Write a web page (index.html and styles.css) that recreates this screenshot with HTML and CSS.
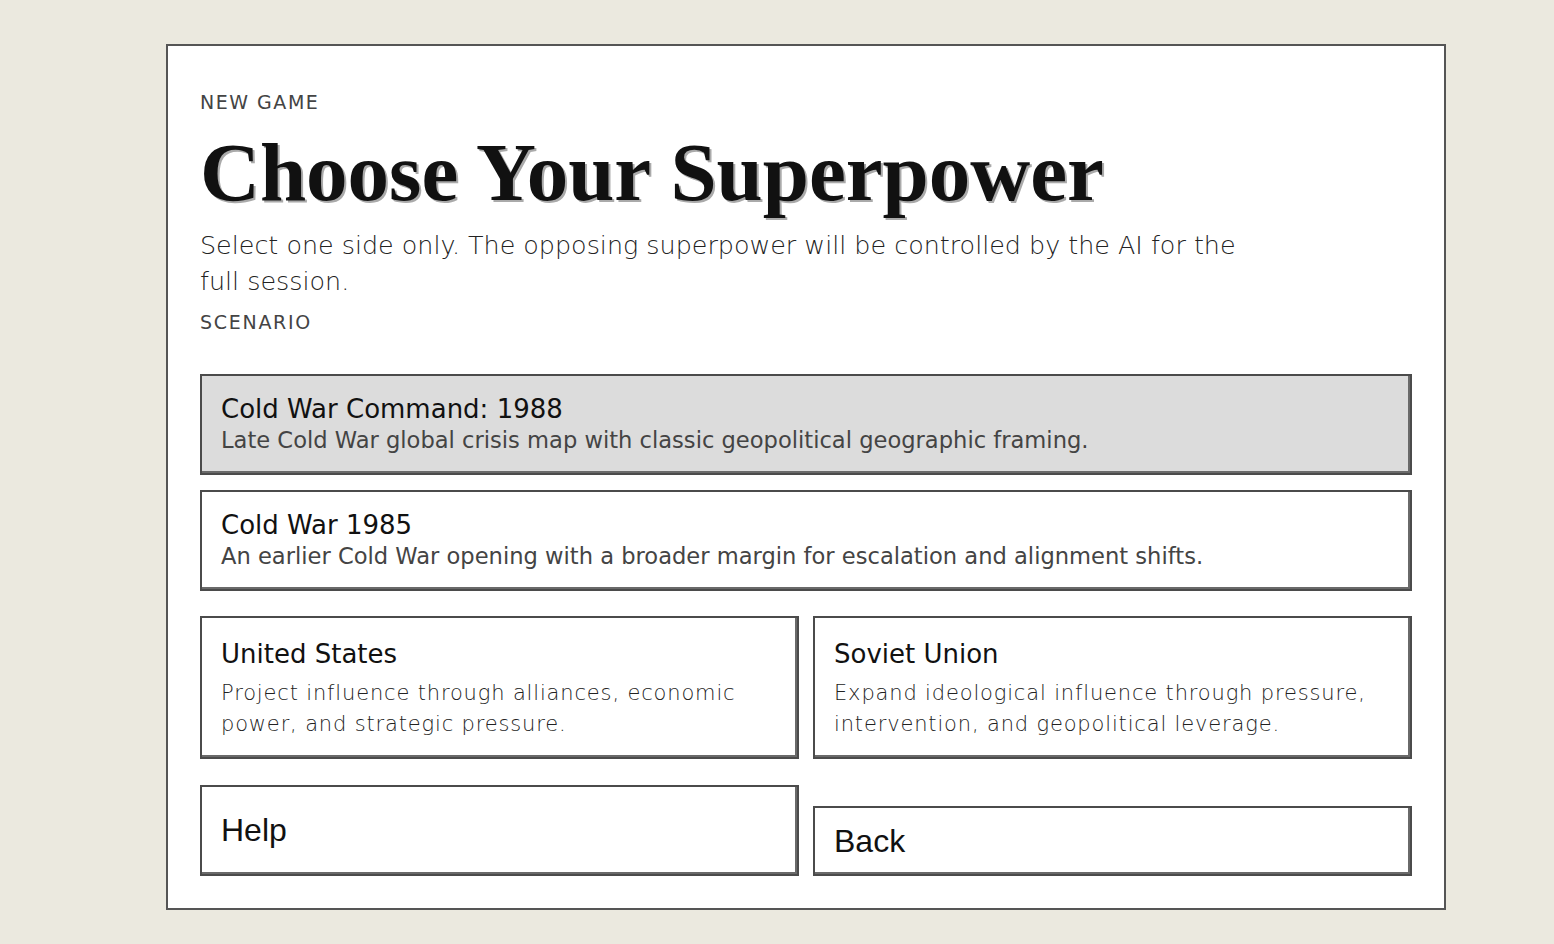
FILE: index.html
```html
<!DOCTYPE html>
<html lang="en">
<head>
    <meta charset="UTF-8">
    <meta name="viewport" content="width=device-width, initial-scale=1.0">
    <title>New Game - Choose Your Superpower</title>
    <link rel="stylesheet" href="styles.css">
</head>
<body>
    <main class="panel">
        <p class="eyebrow">NEW GAME</p>
        <h1 class="title">Choose Your Superpower</h1>
        <p class="lead">Select one side only. The opposing superpower will be controlled by the AI for the full session.</p>
        <p class="label">SCENARIO</p>

        <div class="scenarios">
            <button class="card scenario selected">
                <span class="card-title">Cold War Command: 1988</span>
                <span class="card-text">Late Cold War global crisis map with classic geopolitical geographic framing.</span>
            </button>
            <button class="card scenario">
                <span class="card-title">Cold War 1985</span>
                <span class="card-text">An earlier Cold War opening with a broader margin for escalation and alignment shifts.</span>
            </button>
        </div>

        <div class="sides">
            <button class="card side">
                <span class="card-title">United States</span>
                <span class="side-text">Project influence through alliances, economic power, and strategic pressure.</span>
            </button>
            <button class="card side">
                <span class="card-title">Soviet Union</span>
                <span class="side-text">Expand ideological influence through pressure, intervention, and geopolitical leverage.</span>
            </button>
        </div>

        <div class="actions">
            <button class="card action help">Help</button>
            <button class="card action back">Back</button>
        </div>
    </main>
</body>
</html>
```

FILE: styles.css
```css
body {
    margin: 0;
    padding: 44px 0 34px 166px;
    background-color: #ebe9df;
    font-family: "DejaVu Sans", sans-serif;
    color: #111;
}
.panel {
    width: 1212px;
    padding: 32px;
    background-color: #fff;
    border: 2px solid #555;
}
.eyebrow {
    margin: 12px 0 0;
    font-size: 19px;
    line-height: 24px;
    letter-spacing: 0.08em;
    color: #444;
}
.title {
    margin: 3px 0 0;
    font-family: "Liberation Serif", serif;
    font-size: 83px;
    line-height: 110px;
    font-weight: bold;
    color: #111;
    text-shadow: 2px 2px 0 #aaa;
}
.lead {
    margin: 0;
    max-width: 1060px;
    font-size: 25.4px;
    line-height: 36px;
    font-weight: 300;
    color: #222;
}
.label {
    margin: 11px 0 0;
    font-size: 19px;
    line-height: 24px;
    letter-spacing: 0.09em;
    color: #444;
}
.card {
    display: flex;
    flex-direction: column;
    justify-content: flex-start;
    width: 100%;
    margin: 0;
    text-align: left;
    background-color: #fff;
    border: 2px solid #4b4b4b;
    box-shadow: inset -2px -2px 0 #6a6a6a;
    font-family: "DejaVu Sans", sans-serif;
    color: #111;
    cursor: pointer;
}
.scenarios {
    margin-top: 40px;
    display: flex;
    flex-direction: column;
    gap: 15px;
}
.scenario {
    height: 101px;
    padding: 17px 19px 0;
}
.selected {
    background-color: #dcdcdc;
}
.card-title {
    display: block;
    font-size: 26px;
    line-height: 32px;
}
.card-text {
    display: block;
    font-size: 22.6px;
    line-height: 30px;
    color: #444;
}
.sides {
    margin-top: 25px;
    display: grid;
    grid-template-columns: 1fr 1fr;
    gap: 14px;
}
.side {
    height: 143px;
    padding: 20px 19px 0;
}
.side-text {
    display: block;
    margin-top: 8px;
    font-size: 21px;
    line-height: 31px;
    font-weight: 300;
    letter-spacing: 0.04em;
    color: #222;
}
.actions {
    margin-top: 26px;
    display: grid;
    grid-template-columns: 1fr 1fr;
    gap: 14px;
    align-items: end;
}
.action {
    justify-content: center;
    padding: 0 19px;
    font-family: "Liberation Sans", Arial, sans-serif;
    font-size: 32px;
}
.help {
    height: 91px;
}
.back {
    height: 70px;
}
```
